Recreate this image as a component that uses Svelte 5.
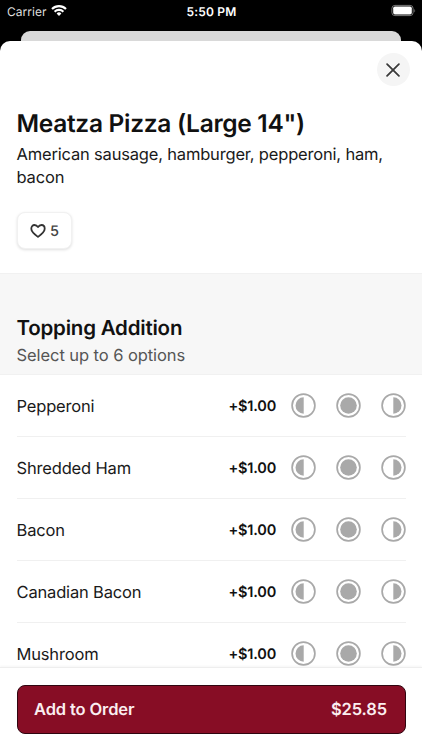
<script lang="ts">
  const price = "+$1.00";
  const toppings = ["Pepperoni", "Shredded Ham", "Bacon", "Canadian Bacon", "Mushroom"];
  const portions = ["left", "whole", "right"];
  let likes = $state(5);
</script>

<div class="screen">
  <div class="status">
    <div class="carrier">
      <span>Carrier</span>
      <svg width="16" height="13" viewBox="0 0 16 13">
        <g fill="none" stroke="#fff" stroke-width="2.1">
          <path d="M1 5a10 10 0 0 1 14 0" />
          <path d="M3.6 7.7a6.3 6.3 0 0 1 8.8 0" />
        </g>
        <path fill="#fff" d="M5.6 9.5a3.5 3.5 0 0 1 4.8 0L8 11.9z" />
      </svg>
    </div>
    <span class="time">5:50 PM</span>
    <svg class="battery" width="26" height="13" viewBox="0 0 26 13">
      <rect x="1.9" y="1.4" width="21.2" height="10.2" rx="3" fill="none" stroke="#777" />
      <rect x="3.2" y="2.6" width="18.6" height="7.8" rx="1.7" fill="#fff" />
      <path d="M24.4 4.9c1 .5 1 3 0 3.5z" fill="#777" />
    </svg>
  </div>
  <div class="behind"></div>

  <div class="sheet">
    <div class="top">
      <button class="close" aria-label="Close">
        <svg width="14" height="14" viewBox="0 0 14 14">
          <path d="M1.1 1.1l11.8 11.8M12.9 1.1L1.1 12.9" fill="none" stroke="#3a3a3a" stroke-width="1.8" stroke-linecap="round" />
        </svg>
      </button>
    </div>
    <div class="intro">
      <h1>Meatza Pizza (Large 14")</h1>
      <p>American sausage, hamburger, pepperoni, ham, bacon</p>
      <button class="like" onclick={() => likes++}>
        <svg width="16" height="14" viewBox="0 0 16 14">
          <path
            d="M8 12.9C5.5 11 1.3 8 1.3 4.7 1.3 2.4 2.7 1 4.5 1 6 1 7.2 1.8 8 3.1 8.8 1.8 10 1 11.5 1c1.8 0 3.2 1.4 3.2 3.7 0 3.3-4.2 6.3-6.7 8.2z"
            fill="none" stroke="#333" stroke-width="1.8" stroke-linejoin="round"
          />
        </svg>
        <span>{likes}</span>
      </button>
    </div>
    <div class="section">
      <h2>Topping Addition</h2>
      <p>Select up to 6 options</p>
    </div>
    <ul>
      {#each toppings as topping}
        <li>
          <span class="name">{topping}</span>
          <span class="price">{price}</span>
          <div class="portions">
            {#each portions as portion}
              <svg width="25" height="25" viewBox="0 0 25 25">
                <circle cx="12.5" cy="12.5" r="11.4" fill="none" stroke="#a9a9a9" stroke-width="1.7" />
                {#if portion === "left"}
                  <path d="M12.7 4.3a8.2 8.2 0 0 0 0 16.4z" fill="#a9a9a9" />
                {:else if portion === "right"}
                  <path d="M12.3 4.3a8.2 8.2 0 0 1 0 16.4z" fill="#a9a9a9" />
                {:else}
                  <circle cx="12.5" cy="12.5" r="8.3" fill="#a9a9a9" />
                {/if}
              </svg>
            {/each}
          </div>
        </li>
      {/each}
    </ul>
    <div class="footer">
      <button class="order">
        <span>Add to Order</span>
        <span>$25.85</span>
      </button>
    </div>
  </div>
</div>

<style>
  :global(body) {
    background: #000;
  }
  .screen {
    width: 422px;
    height: 750px;
    overflow: hidden;
    display: flex;
    flex-direction: column;
    background: #000;
    color: #1a1a1a;
    font-family: Inter, "Liberation Sans", sans-serif;
    text-rendering: geometricPrecision;
  }
  .status {
    box-sizing: border-box;
    height: 31px;
    padding: 4px 6px 0 7px;
    display: grid;
    grid-template-columns: 1fr auto 1fr;
    align-items: start;
    color: #fff;
    font-size: 12px;
    line-height: 15px;
  }
  .carrier {
    display: flex;
    gap: 4px;
    color: #ddd;
    letter-spacing: 0.05px;
  }
  .time {
    font-weight: 600;
    letter-spacing: 0.2px;
  }
  .battery {
    justify-self: end;
  }
  .behind {
    height: 10px;
    margin: 0 21px;
    border-radius: 9px 9px 0 0;
    background: #d9d9d9;
  }
  .sheet {
    flex: 1;
    min-height: 0;
    display: flex;
    flex-direction: column;
    overflow: hidden;
    border-radius: 10px 10px 0 0;
    background: #fff;
  }
  button {
    border: 0;
    font-family: inherit;
    text-rendering: inherit;
  }
  .top {
    flex: none;
    display: flex;
    justify-content: flex-end;
    padding: 12px 12.5px 0;
  }
  .close {
    width: 33px;
    height: 33px;
    padding: 0;
    display: grid;
    place-items: center;
    border-radius: 50%;
    background: #f5f5f5;
  }
  .intro {
    flex: none;
    box-sizing: border-box;
    height: 188px;
    padding: 22px 17px 0 16.5px;
    border-bottom: 1px solid #f1f1f1;
  }
  h1,
  h2,
  p,
  ul {
    margin: 0;
  }
  h1 {
    color: #111;
    font-size: 24.5px;
    font-weight: 600;
    letter-spacing: -0.3px;
    line-height: 30px;
    white-space: nowrap;
  }
  .intro p {
    margin-top: 5px;
    font-size: 16.5px;
    letter-spacing: -0.18px;
    line-height: 22.5px;
  }
  .like {
    box-sizing: border-box;
    width: 55.5px;
    height: 37px;
    margin-top: 24px;
    padding: 0;
    display: flex;
    align-items: center;
    justify-content: center;
    gap: 4.5px;
    border: 1px solid #f1f1f1;
    border-radius: 8px;
    background: #fff;
    box-shadow: 0 1px 3px rgba(0, 0, 0, 0.13);
    color: #444;
    font-size: 14.5px;
    font-weight: 500;
    line-height: 18px;
  }
  .like span {
    padding-top: 2px;
  }
  .section {
    flex: none;
    box-sizing: border-box;
    height: 101px;
    padding: 40px 16.5px 0;
    background: #f7f7f7;
    border-bottom: 1px solid #f1f1f1;
  }
  h2 {
    color: #111;
    font-size: 20.5px;
    font-weight: 600;
    letter-spacing: -0.21px;
    line-height: 28px;
  }
  .section p {
    margin-top: 2px;
    color: #555;
    font-size: 16.5px;
    letter-spacing: -0.07px;
    line-height: 22px;
  }
  ul {
    flex: 1;
    min-height: 0;
    overflow: hidden;
    padding: 0 16.5px;
    list-style: none;
  }
  li {
    box-sizing: border-box;
    height: 62.1px;
    display: flex;
    align-items: center;
    border-bottom: 1px solid #f0f0f0;
  }
  .name {
    flex: 1;
    font-size: 16.5px;
    letter-spacing: -0.17px;
  }
  .price {
    margin-right: 15px;
    padding-top: 1px;
    color: #111;
    font-size: 14.5px;
    font-weight: 600;
    letter-spacing: -0.17px;
  }
  .portions {
    display: flex;
    gap: 19.7px;
  }
  .footer {
    flex: none;
    box-sizing: border-box;
    height: 83px;
    padding: 17px 16.5px 0;
    border-top: 1px solid #eee;
    box-shadow: 0 -1px 2px rgba(0, 0, 0, 0.04);
    background: #fff;
  }
  .order {
    box-sizing: border-box;
    width: 100%;
    height: 49px;
    padding: 0 17.5px 2px 16.5px;
    display: flex;
    align-items: center;
    justify-content: space-between;
    border: 1px solid #300510;
    border-radius: 8px;
    background: #870d25;
    color: #fbeef0;
    font-size: 16.5px;
    font-weight: 600;
    letter-spacing: -0.12px;
  }
</style>
